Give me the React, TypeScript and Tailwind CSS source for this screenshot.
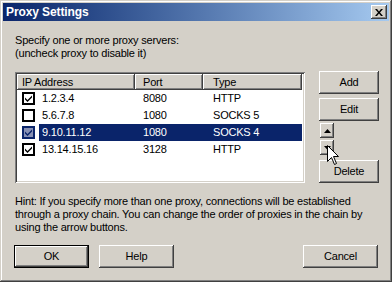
import React from "react";

const raised =
  "shadow-[inset_-1px_-1px_#404040,inset_1px_1px_#ffffff,inset_-2px_-2px_#808080,inset_2px_2px_#d4d0c8]";

function Btn({ children, className = "", def = false }: { children?: React.ReactNode; className?: string; def?: boolean }) {
  if (def) {
    return (
      <div className={`border border-black ${className}`}>
        <div className={`w-full h-full bg-[#d4d0c8] ${raised} flex items-center justify-center text-black`}>{children}</div>
      </div>
    );
  }
  return (
    <div className={`bg-[#d4d0c8] ${raised} flex items-center justify-center text-black ${className}`}>{children}</div>
  );
}

function Check({ checked, selected = false }: { checked: boolean; selected?: boolean }) {
  return (
    <div
      className={`w-[13px] h-[13px] border-2 flex items-center justify-center ${
        selected ? "border-[#0a246a] bg-[#8891b5]" : "border-black bg-white"
      }`}
    >
      {checked && (
        <svg width="7" height="7" viewBox="0 0 7 7">
          <path d="M0 2.5 L2.5 5 L7 0.5 L7 2.5 L2.5 7 L0 4.5 Z" fill={selected ? "#0a246a" : "#000"} />
        </svg>
      )}
    </div>
  );
}

const rows = [
  { ip: "1.2.3.4", port: "8080", type: "HTTP", checked: true },
  { ip: "5.6.7.8", port: "1080", type: "SOCKS 5", checked: false },
  { ip: "9.10.11.12", port: "1080", type: "SOCKS 4", checked: true, selected: true },
  { ip: "13.14.15.16", port: "3128", type: "HTTP", checked: true },
];

const hdr = "shadow-[inset_-1px_-1px_#404040,inset_1px_1px_#ffffff,inset_-2px_-2px_#808080] bg-[#d4d0c8] h-full flex items-center";

export default function App() {
  return (
    <div className="w-[392px] h-[282px] bg-[#d4d0c8] p-[3px] flex flex-col relative font-['Liberation_Sans',Arial,sans-serif] text-[11px] tracking-[-0.2px] text-black shadow-[inset_-1px_-1px_#404040,inset_1px_1px_#d4d0c8,inset_-2px_-2px_#808080,inset_2px_2px_#ffffff] overflow-hidden">
      <div className="h-[18px] flex items-center justify-between pl-[3px] pr-[2px] bg-gradient-to-r from-[#0a246a] to-[#a6caf0]">
        <span className="text-white font-bold text-[12px] tracking-[-0.1px]">Proxy Settings</span>
        <Btn className="w-[16px] h-[14px]">
          <svg width="8" height="7" viewBox="0 0 8 7">
            <path d="M0 0h2l2 2.5L6 0h2L5 3.5 8 7H6L4 4.5 2 7H0l3-3.5z" fill="#000" />
          </svg>
        </Btn>
      </div>
      <div className="flex-1 flex flex-col pl-[12px] pt-[13px]">
        <div className="leading-[13px] whitespace-nowrap">
          <div>Specify one or more proxy servers:</div>
          <div>(uncheck proxy to disable it)</div>
        </div>
        <div className="flex mt-[11px] h-[112px]">
          <div className="mt-[1px] w-[290px] h-[111px] bg-white p-[2px] shadow-[inset_1px_1px_#808080,inset_-1px_-1px_#ffffff,inset_2px_2px_#404040,inset_-2px_-2px_#d4d0c8]">
            <div className="h-[16px] flex">
              <div className={`${hdr} w-[118px] pl-[5px]`}>IP Address</div>
              <div className={`${hdr} w-[68px] pl-[8px]`}>Port</div>
              <div className={`${hdr} w-[99px] pl-[10px]`}>Type</div>
            </div>
            {rows.map((r) => (
              <div key={r.ip} className="h-[17px] flex items-center">
                <div className="w-[22px] pl-[5px] flex items-center">
                  <Check checked={r.checked} selected={r.selected} />
                </div>
                <div className={`flex h-full items-center w-[263px] ${r.selected ? "bg-[#0a246a] text-white" : ""}`}>
                  <div className="w-[96px] pl-[3px]">{r.ip}</div>
                  <div className="w-[68px] pl-[8px]">{r.port}</div>
                  <div className="pl-[10px]">{r.type}</div>
                </div>
              </div>
            ))}
          </div>
          <div className="ml-[14px] w-[60px] flex flex-col">
            <Btn className="h-[23px]">Add</Btn>
            <Btn className="h-[23px] mt-[4px]">Edit</Btn>
            <Btn className="w-[14px] h-[15px] mt-[2px] ml-[1px]">
              <svg width="7" height="4" viewBox="0 0 7 4"><path d="M3.5 0L7 4H0z" fill="#000" /></svg>
            </Btn>
            <Btn className="w-[14px] h-[15px] mt-[2px] ml-[1px]">
              <svg width="7" height="4" viewBox="0 0 7 4"><path d="M0 0h7L3.5 4z" fill="#000" /></svg>
            </Btn>
            <Btn className="h-[23px] mt-[5px]">Delete</Btn>
          </div>
        </div>
        <div className="mt-[12px] leading-[13px] whitespace-nowrap">
          <div>Hint: If you specify more than one proxy, connections will be established</div>
          <div>through a proxy chain. You can change the order of proxies in the chain by</div>
          <div>using the arrow buttons.</div>
        </div>
        <div className="flex mt-[11px] ml-[-1px]">
          <Btn def className="w-[75px] h-[23px]">OK</Btn>
          <Btn className="w-[75px] h-[23px] ml-[10px]">Help</Btn>
          <Btn className="w-[75px] h-[23px] ml-[129px]">Cancel</Btn>
        </div>
      </div>
      <svg className="absolute left-[327px] top-[145px]" width="13" height="21" viewBox="0 0 13 21">
        <path d="M0.5 0.5 L0.5 16.5 L4.5 12.5 L7.5 19.5 L9.5 18.5 L6.5 11.5 L11.5 11.5 Z" fill="#fff" stroke="#000" strokeWidth="1" />
      </svg>
    </div>
  );
}
